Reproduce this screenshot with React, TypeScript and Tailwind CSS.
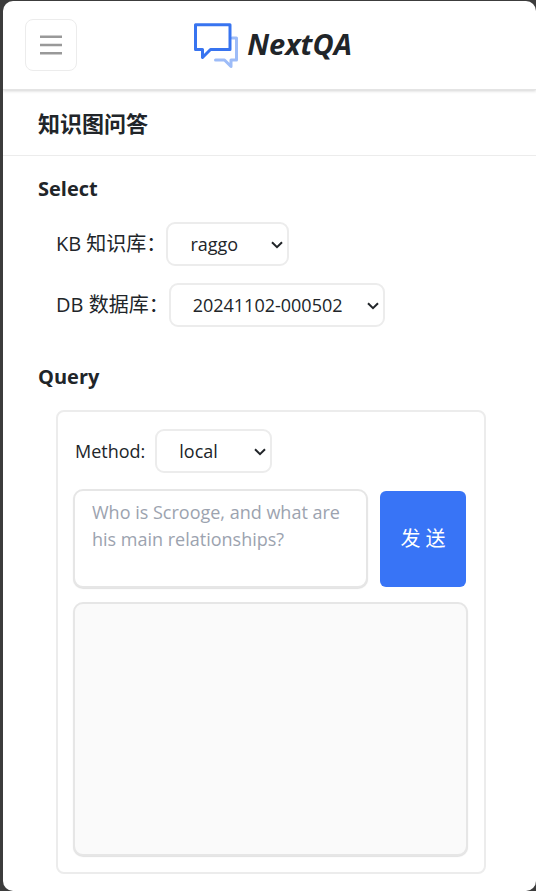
import type { ReactNode } from 'react';

type PickerProps = {
  id: string;
  options: string[];
  className: string;
};

function Picker({ id, options, className }: PickerProps) {
  return (
    <div className={`relative shrink-0 ${className}`}>
      <select
        id={id}
        className="h-11 w-full appearance-none rounded-[9px] border-2 border-[#ececec] bg-white pl-[22px] pr-8 text-[18px] leading-6 text-[#212529] outline-none"
      >
        {options.map((option) => (
          <option key={option}>{option}</option>
        ))}
      </select>
      <svg
        aria-hidden="true"
        viewBox="0 0 12 8"
        className="pointer-events-none absolute right-[6px] top-[19px] h-2 w-3"
        fill="none"
        stroke="#212529"
        strokeWidth="2"
      >
        <path d="M1 1.2 6 6.2 11 1.2" />
      </svg>
    </div>
  );
}

function Heading({ children }: { children: ReactNode }) {
  return <h3 className="text-[20px] font-bold leading-7">{children}</h3>;
}

function Logo() {
  return (
    <svg aria-hidden="true" viewBox="0 0 46 46" className="h-[46px] w-[46px]" fill="none" strokeWidth="3" strokeLinejoin="round" strokeLinecap="round">
      <path stroke="#9dbcf8" d="M39 16h4.500V38h-5.500V44.500L31.500 38H22.500" />
      <path stroke="#3874f0" d="M2.500 2.800H37V27.500H17.500L9.500 35.500V27.500H2.500z" />
    </svg>
  );
}

export default function App() {
  return (
    <div className="min-h-screen bg-[#3c3c3c] pl-[3px] pt-px font-['Open_Sans','Noto_Sans_CJK_SC',sans-serif] text-[#212529]">
      <div className="min-h-[calc(100vh-1px)] overflow-hidden rounded-[10px] bg-white pb-[17px]">
        <header className="grid h-[89px] grid-cols-[1fr_auto_1fr] items-center border-b border-[#e4e4e4] pl-[22px] pr-4 shadow-[0_1px_3px_rgba(0,0,0,0.18)]">
          <button
            type="button"
            aria-label="Menu"
            className="flex h-[52px] w-[52px] items-center justify-center rounded-lg border border-[#ececec] bg-white"
          >
            <svg aria-hidden="true" viewBox="0 0 24 20" className="h-5 w-6" fill="none" stroke="#999999" strokeWidth="2.500">
              <path d="M1 1.700h22M1 10h22M1 18.300h22" />
            </svg>
          </button>
          <div className="flex items-center gap-2">
            <Logo />
            <h1 className="pb-0.5 text-[29px] font-bold italic leading-9">NextQA</h1>
          </div>
        </header>

        <h2 className="flex h-[66px] items-center border-b border-[#ececec] pl-[35px] text-[22px] font-bold leading-8">
          知识图问答
        </h2>

        <main className="pl-[35px] pr-[50px] pt-[19px]">
          <section>
            <Heading>Select</Heading>
            <div className="flex flex-col gap-[17px] pl-[18px] pt-[19px]">
              <div className="flex items-center">
                <label htmlFor="kb" className="text-[20px] leading-7">KB 知识库：</label>
                <Picker id="kb" options={['raggo']} className="w-[123px]" />
              </div>
              <div className="flex items-center">
                <label htmlFor="db" className="text-[20px] leading-7">DB 数据库：</label>
                <Picker id="db" options={['20241102-000502']} className="w-[216px]" />
              </div>
            </div>
          </section>

          <section className="pt-9">
            <Heading>Query</Heading>
            <form className="ml-[18px] mt-[19px] rounded-lg border-2 border-[#ececec] pb-4 pl-[15px] pr-4 pt-[17px]" onSubmit={(e) => e.preventDefault()}>
              <div className="flex items-center gap-2.5 pl-0.5">
                <label htmlFor="method" className="text-[18px] leading-6">Method:</label>
                <Picker id="method" options={['local']} className="w-[117px]" />
              </div>
              <div className="mt-4 flex items-center gap-3 pr-0.5">
                <textarea
                  id="question"
                  aria-label="Question"
                  placeholder="Who is Scrooge, and what are his main relationships?"
                  className="h-[99px] min-w-0 flex-1 resize-none overflow-hidden rounded-[10px] border-2 border-[#e6e6e6] bg-white px-[17px] py-2 text-[18px] leading-[27px] shadow-[0_1px_1px_rgba(0,0,0,0.12)] outline-none placeholder:text-[#9ca3af]"
                />
                <button type="submit" className="h-24 w-[86px] shrink-0 rounded-md bg-[#3874f6] text-[20px] text-white">
                  发 送
                </button>
              </div>
              <div className="mt-3.5 h-[254px] rounded-[10px] border-2 border-[#e6e6e6] bg-[#fafafa] shadow-[0_1px_1px_rgba(0,0,0,0.12)]" />
            </form>
          </section>
        </main>
      </div>
    </div>
  );
}
